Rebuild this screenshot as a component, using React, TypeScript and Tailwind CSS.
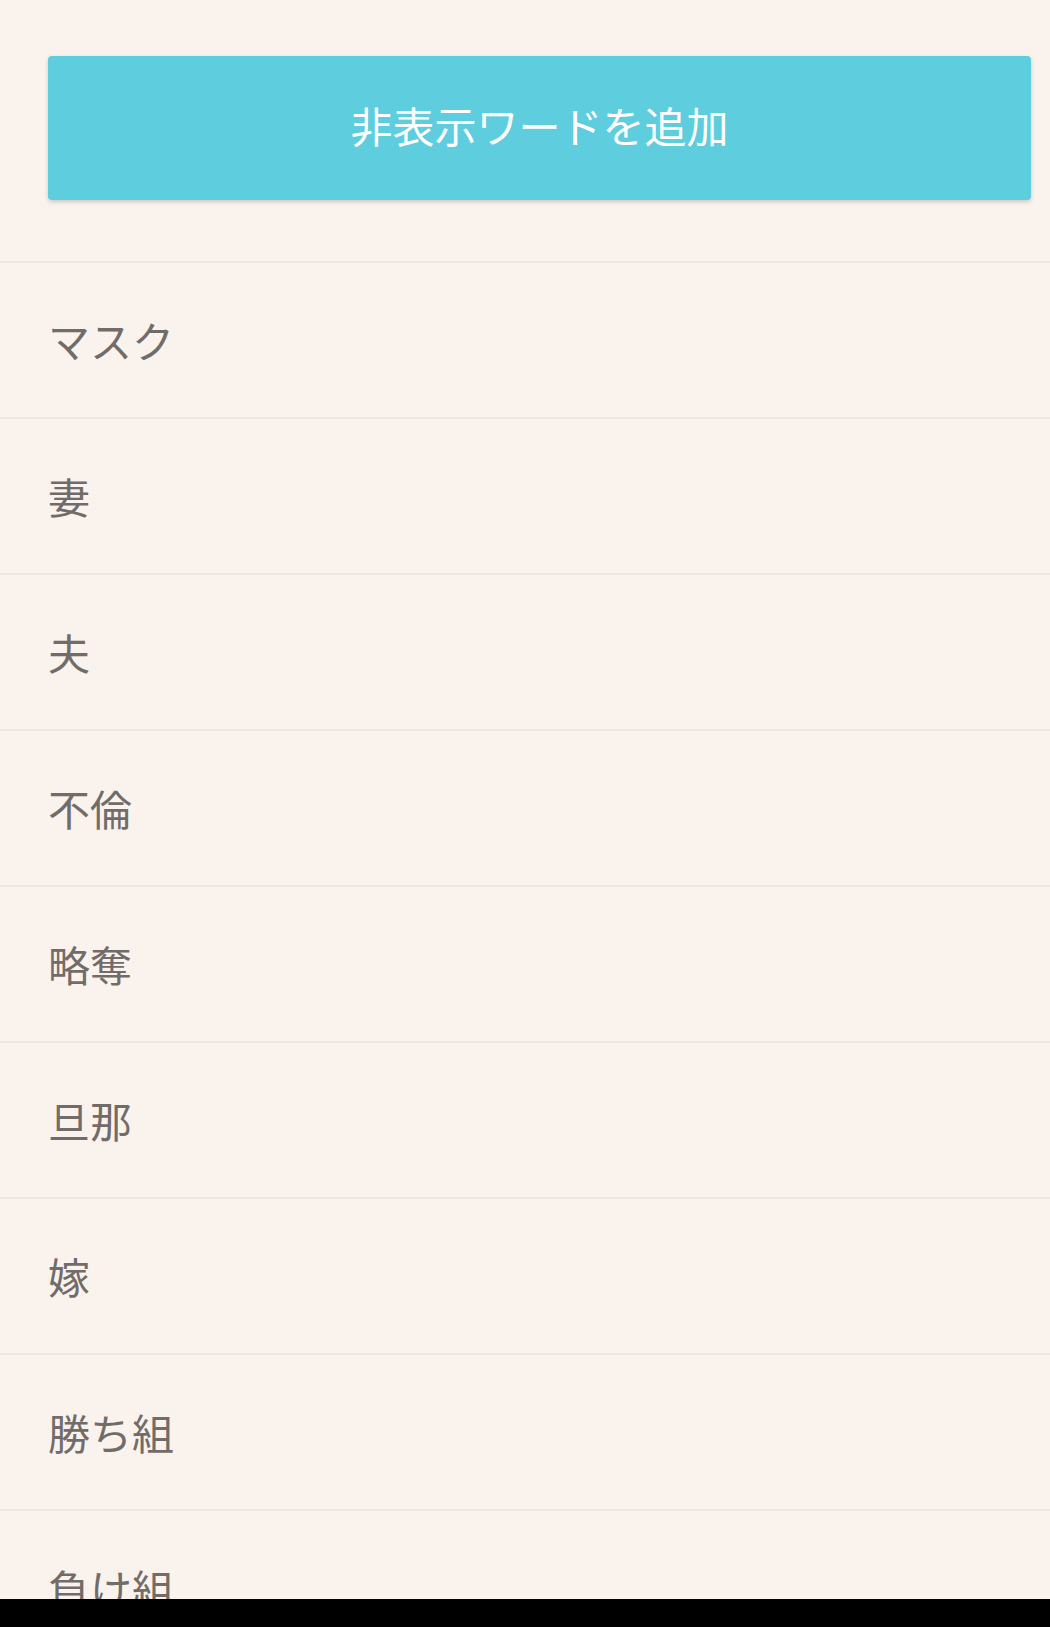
import React from "react";

const words = ["マスク", "妻", "夫", "不倫", "略奪", "旦那", "嫁", "勝ち組", "負け組"];

export default function App() {
  return (
    <div
      className="relative h-[1627px] w-[1050px] overflow-hidden bg-[#faf3ed]"
      style={{ fontFamily: '"Noto Sans CJK JP", "Noto Sans", sans-serif' }}
    >
      <div className="pt-[56px] pl-[48px] pr-[19px]">
        <button className="flex h-[144px] w-full items-center justify-center rounded-[4px] bg-[#5ecddd] pb-[6px] text-[42px] leading-none text-white shadow-[0_2px_4px_rgba(0,0,0,0.18)]">
          非表示ワードを追加
        </button>
      </div>
      <div className="mt-[61px]">
        {words.map((w) => (
          <div
            key={w}
            className="flex h-[156px] items-center border-t-2 border-[#ece5e0] pl-[48px] text-[42px] leading-none text-[#716c69]"
          >
            {w}
          </div>
        ))}
      </div>
      <div className="absolute bottom-0 left-0 h-[28px] w-full bg-black" />
    </div>
  );
}
